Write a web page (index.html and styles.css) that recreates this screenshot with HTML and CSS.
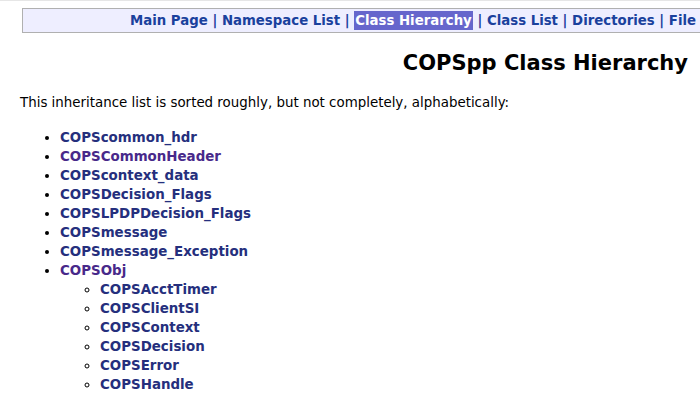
FILE: index.html
```html
<!DOCTYPE html>
<html>
<head>
<meta charset="utf-8">
<link rel="stylesheet" href="styles.css">
</head>
<body>
<div class="topline"></div>
<div class="qindex"><a class="qindex" href="#">Main Page</a> | <a class="qindex" href="#">Namespace List</a> | <a class="qindexHL" href="#">Class Hierarchy</a> | <a class="qindex" href="#">Class List</a> | <a class="qindex" href="#">Directories</a> | <a class="qindex" href="#">File List</a></div>
<h1>COPSpp Class Hierarchy</h1>
<p class="intro">This inheritance list is sorted roughly, but not completely, alphabetically:</p>
<ul class="tree">
<li><a class="el" href="#">COPScommon_hdr</a></li>
<li><a class="el visited" href="#">COPSCommonHeader</a></li>
<li><a class="el" href="#">COPScontext_data</a></li>
<li><a class="el" href="#">COPSDecision_Flags</a></li>
<li><a class="el" href="#">COPSLPDPDecision_Flags</a></li>
<li><a class="el" href="#">COPSmessage</a></li>
<li><a class="el" href="#">COPSmessage_Exception</a></li>
<li><a class="el visited" href="#">COPSObj</a>
<ul class="sub">
<li><a class="el" href="#">COPSAcctTimer</a></li>
<li><a class="el" href="#">COPSClientSI</a></li>
<li><a class="el" href="#">COPSContext</a></li>
<li><a class="el" href="#">COPSDecision</a></li>
<li><a class="el" href="#">COPSError</a></li>
<li><a class="el" href="#">COPSHandle</a></li>
</ul>
</li>
</ul>
</body>
</html>
```
FILE: styles.css
```css
html, body {
  margin: 0;
  padding: 0;
  background: #ffffff;
  overflow: hidden;
}
body {
  font-family: "DejaVu Sans", sans-serif;
  font-size: 13.4px;
  color: #000000;
}
.topline {
  height: 1px;
  background: #e6e6e6;
}
div.qindex {
  margin: 7px 0 0 22px;
  width: 900px;
  height: 25px;
  box-sizing: border-box;
  background: #eeeeff;
  border: 1px solid #b0b0b0;
  padding-left: 107px;
  white-space: nowrap;
  font-size: 13.3px;
  font-weight: bold;
  line-height: 23px;
  color: #1a419d;
}
a.qindex {
  text-decoration: none;
  color: #1a419d;
}
a.qindexHL {
  text-decoration: none;
  background: #6666cc;
  color: #ffffff;
  padding: 2px 1px;
}
h1 {
  margin: 17px 12px 0 0;
  text-align: right;
  font-size: 21px;
  font-weight: bold;
  line-height: 26px;
}
p.intro {
  margin: 18px 0 0 20px;
  line-height: 18px;
}
ul.tree {
  margin: 16px 0 0 20px;
  padding: 0 0 0 40px;
  list-style: disc;
}
ul.tree li {
  line-height: 19px;
  font-size: 13.4px;
}
ul.sub {
  margin: 0;
  padding: 0 0 0 40px;
  list-style: circle;
}
a.el {
  text-decoration: none;
  font-weight: bold;
  color: #252f7d;
}
a.el.visited {
  color: #48298a;
}
```
